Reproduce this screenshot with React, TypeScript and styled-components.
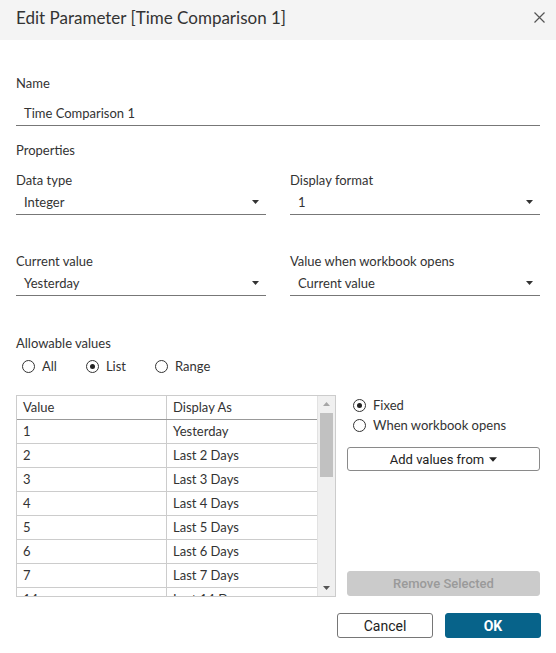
import React from 'react'
import styled, { createGlobalStyle } from 'styled-components'

const GlobalStyle = createGlobalStyle`
  html, body {
    margin: 0;
    padding: 0;
    background: #fff;
  }
  body {
    font-family: Lato, "Noto Sans", sans-serif;
    color: #333;
  }
  * {
    box-sizing: border-box;
  }
`

const Dialog = styled.div`
  width: 556px;
  height: 653px;
  background: #fff;
  display: flex;
  flex-direction: column;
`

const TitleBar = styled.div`
  height: 40px;
  background: #f4f4f4;
  display: flex;
  align-items: center;
  justify-content: space-between;
  padding: 0 11px 0 16px;
`

const Title = styled.h1`
  margin: 0;
  font-size: 17px;
  font-weight: 400;
  color: #333;
  line-height: 22px;
  margin-top: -5px;
`

const CloseButton = styled.button`
  width: 11px;
  height: 11px;
  padding: 0;
  border: 0;
  background: none;
  display: flex;
  margin-top: -5px;
  cursor: pointer;
`

const Body = styled.div`
  padding: 35px 16px 0;
  display: flex;
  flex-direction: column;
`

const Label = styled.div<{ $top?: number; $bottom?: number }>`
  font-size: 13px;
  line-height: 16px;
  height: 16px;
  color: #333;
  margin-top: ${(p) => p.$top ?? 0}px;
  margin-bottom: ${(p) => p.$bottom ?? 0}px;
`

const TextField = styled.div`
  height: 25px;
  padding-left: 8px;
  font-size: 13px;
  line-height: 24px;
  border-bottom: 1px solid #777;
`

const FieldGrid = styled.div<{ $top: number }>`
  display: grid;
  grid-template-columns: 1fr 1fr;
  column-gap: 24px;
  margin-top: ${(p) => p.$top}px;
`

const Field = styled.div`
  display: flex;
  flex-direction: column;
`

const Select = styled.div`
  margin-top: 3px;
  height: 24px;
  display: flex;
  align-items: center;
  justify-content: space-between;
  padding: 0 7px 1px 8px;
  font-size: 13px;
  border-bottom: 1px solid #777;
`

const RadioRow = styled.div`
  display: flex;
  gap: 29px;
  margin-top: 7px;
  padding-left: 6px;
  height: 16px;
`

const RadioOption = styled.label<{ $height?: number }>`
  display: flex;
  align-items: center;
  gap: 7px;
  font-size: 13px;
  height: ${(p) => p.$height ?? 16}px;
  color: #333;
`

const RadioCircle = styled.span<{ $checked?: boolean }>`
  width: 13px;
  height: 13px;
  border-radius: 50%;
  border: 1px solid #333;
  background: #fff;
  display: flex;
  align-items: center;
  justify-content: center;
  &::after {
    content: '';
    width: 5px;
    height: 5px;
    border-radius: 50%;
    background: #222;
    display: ${(p) => (p.$checked ? 'block' : 'none')};
  }
`

const ValuesArea = styled.div`
  margin-top: 21px;
  display: flex;
  gap: 11px;
  height: 202px;
`

const Table = styled.div`
  flex: 0 0 320px;
  border: 1px solid #ccc;
  display: flex;
  overflow: hidden;
`

const TableRows = styled.div`
  flex: 1;
  overflow: hidden;
`

const TableRow = styled.div<{ $head?: boolean }>`
  display: grid;
  grid-template-columns: 150px 1fr;
  height: 24px;
  border-bottom: 1px solid ${(p) => (p.$head ? '#999' : '#ccc')};
`

const Cell = styled.div`
  padding-left: 6px;
  font-size: 13px;
  line-height: 23px;
  color: #333;
  white-space: nowrap;
  &:first-child {
    border-right: 1px solid #ccc;
  }
`

const Scrollbar = styled.div`
  flex: 0 0 18px;
  background: #f0f0f0;
  border-left: 1px solid #e2e2e2;
  display: flex;
  flex-direction: column;
  align-items: center;
`

const ScrollArrow = styled.div<{ $down?: boolean }>`
  height: 17px;
  display: flex;
  align-items: center;
  justify-content: center;
  color: ${(p) => (p.$down ? '#555' : '#a6a6a6')};
  transform: ${(p) => (p.$down ? 'none' : 'rotate(180deg)')};
`

const ScrollTrack = styled.div`
  flex: 1;
  width: 100%;
  padding: 0 2px;
`

const ScrollThumb = styled.div`
  height: 64px;
  background: #c1c1c1;
`

const SideColumn = styled.div`
  flex: 1;
  display: flex;
  flex-direction: column;
  padding-bottom: 1px;
`

const SideRadios = styled.div`
  display: flex;
  flex-direction: column;
  padding-left: 6px;
`

const SideButton = styled.button<{ $disabled?: boolean }>`
  height: ${(p) => (p.$disabled ? 25 : 24)}px;
  width: 100%;
  border-radius: 3px;
  font-family: Roboto, "Liberation Sans", sans-serif;
  font-size: 13px;
  display: flex;
  align-items: center;
  justify-content: center;
  gap: 5px;
  padding: 0;
  border: 1px solid ${(p) => (p.$disabled ? '#cbcbcb' : '#8a8a8a')};
  background: ${(p) => (p.$disabled ? '#cbcbcb' : '#fff')};
  color: ${(p) => (p.$disabled ? '#9a9a9a' : '#222')};
  font-weight: ${(p) => (p.$disabled ? 500 : 400)};
  margin-top: ${(p) => (p.$disabled ? 'auto' : '12px')};
`

const Footer = styled.div`
  display: flex;
  justify-content: flex-end;
  gap: 12px;
  margin-top: 16px;
  padding-right: 15px;
`

const FooterButton = styled.button<{ $primary?: boolean }>`
  width: 96px;
  height: 25px;
  border-radius: 3px;
  font-family: Roboto, "Liberation Sans", sans-serif;
  font-size: 14px;
  padding: 0;
  border: 1px solid ${(p) => (p.$primary ? '#07638a' : '#767676')};
  background: ${(p) => (p.$primary ? '#07638a' : '#fff')};
  color: ${(p) => (p.$primary ? '#fff' : '#222')};
  font-weight: ${(p) => (p.$primary ? 700 : 400)};
`

const Caret = ({ size = 7 }: { size?: number }) => (
  <svg width={size} height={Math.round(size * 0.6)} viewBox="0 0 7 4" fill="currentColor">
    <path d="M0 0h7L3.5 4z" />
  </svg>
)

const CloseIcon = () => (
  <svg width="11" height="11" viewBox="0 0 11 11" stroke="#555" strokeWidth="1.2">
    <path d="M0.5 0.5l10 10M10.5 0.5l-10 10" />
  </svg>
)

// the last row is only partly visible, cut by the list's bottom edge
const rows: [string, string][] = [
  ['1', 'Yesterday'],
  ['2', 'Last 2 Days'],
  ['3', 'Last 3 Days'],
  ['4', 'Last 4 Days'],
  ['5', 'Last 5 Days'],
  ['6', 'Last 6 Days'],
  ['7', 'Last 7 Days'],
  ['14', 'Last 14 Days'],
]

const App: React.FC = () => {
  return (
    <>
      <GlobalStyle />
      <Dialog>
        <TitleBar>
          <Title>Edit Parameter [Time Comparison 1]</Title>
          <CloseButton aria-label="Close">
            <CloseIcon />
          </CloseButton>
        </TitleBar>
        <Body>
          <Label $bottom={10}>Name</Label>
          <TextField>Time Comparison 1</TextField>
          <Label $top={16}>Properties</Label>

          <FieldGrid $top={14}>
            <Field>
              <Label>Data type</Label>
              <Select>
                <span>Integer</span>
                <Caret />
              </Select>
            </Field>
            <Field>
              <Label>Display format</Label>
              <Select>
                <span>1</span>
                <Caret />
              </Select>
            </Field>
          </FieldGrid>

          <FieldGrid $top={38}>
            <Field>
              <Label>Current value</Label>
              <Select>
                <span>Yesterday</span>
                <Caret />
              </Select>
            </Field>
            <Field>
              <Label>Value when workbook opens</Label>
              <Select>
                <span>Current value</span>
                <Caret />
              </Select>
            </Field>
          </FieldGrid>

          <Label $top={39}>Allowable values</Label>
          <RadioRow>
            <RadioOption>
              <RadioCircle />
              All
            </RadioOption>
            <RadioOption>
              <RadioCircle $checked />
              List
            </RadioOption>
            <RadioOption>
              <RadioCircle />
              Range
            </RadioOption>
          </RadioRow>

          <ValuesArea>
            <Table>
              <TableRows>
                <TableRow $head>
                  <Cell>Value</Cell>
                  <Cell>Display As</Cell>
                </TableRow>
                {rows.map(([value, display]) => (
                  <TableRow key={value}>
                    <Cell>{value}</Cell>
                    <Cell>{display}</Cell>
                  </TableRow>
                ))}
              </TableRows>
              <Scrollbar>
                <ScrollArrow>
                  <Caret size={7} />
                </ScrollArrow>
                <ScrollTrack>
                  <ScrollThumb />
                </ScrollTrack>
                <ScrollArrow $down>
                  <Caret size={7} />
                </ScrollArrow>
              </Scrollbar>
            </Table>

            <SideColumn>
              <SideRadios>
                <RadioOption $height={20}>
                  <RadioCircle $checked />
                  Fixed
                </RadioOption>
                <RadioOption $height={20}>
                  <RadioCircle />
                  When workbook opens
                </RadioOption>
              </SideRadios>
              <SideButton>
                Add values from <Caret size={8} />
              </SideButton>
              <SideButton $disabled>Remove Selected</SideButton>
            </SideColumn>
          </ValuesArea>
        </Body>
        <Footer>
          <FooterButton>Cancel</FooterButton>
          <FooterButton $primary>OK</FooterButton>
        </Footer>
      </Dialog>
    </>
  )
}

export default App
